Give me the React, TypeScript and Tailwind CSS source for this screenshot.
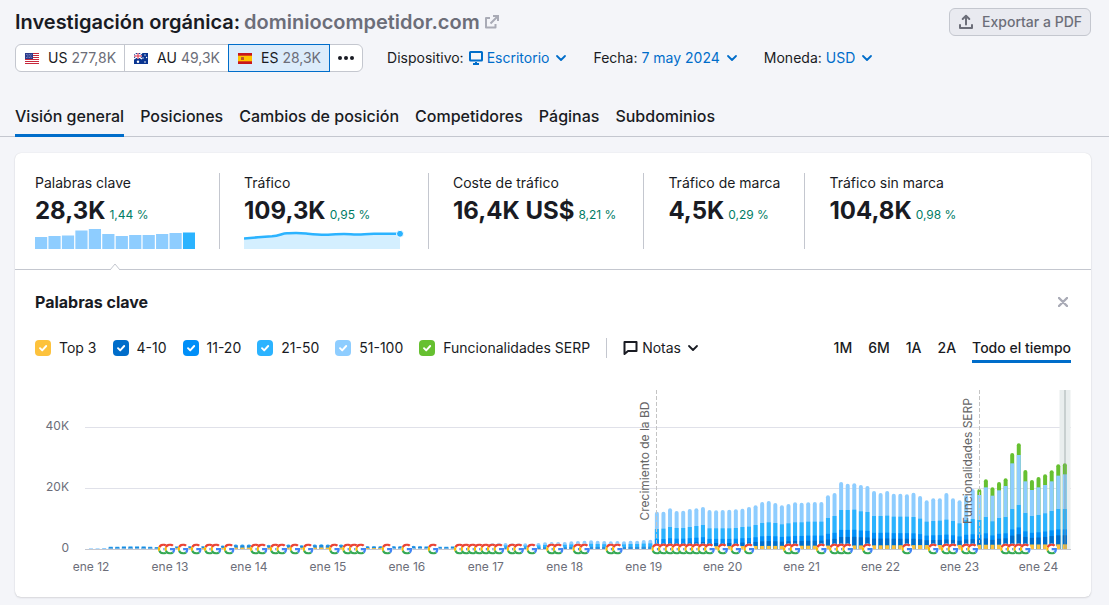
import React from 'react';
import { clsx } from 'clsx';

const countries = [
  { code: 'US', value: '277,8K', flag: <FlagUS /> },
  { code: 'AU', value: '49,3K', flag: <FlagAU /> },
  { code: 'ES', value: '28,3K', flag: <FlagES /> },
];

const tabs = [
  'Visión general',
  'Posiciones',
  'Cambios de posición',
  'Competidores',
  'Páginas',
  'Subdominios',
];

const series = [
  { label: 'Top 3', className: 'bg-[#fdc23c]' },
  { label: '4-10', className: 'bg-[#006dca]' },
  { label: '11-20', className: 'bg-[#008ff8]' },
  { label: '21-50', className: 'bg-[#2bb3ff]' },
  { label: '51-100', className: 'bg-[#8ecdff]' },
  { label: 'Funcionalidades SERP', className: 'bg-[#66c030]' },
];

const ranges = ['1M', '6M', '1A', '2A', 'Todo el tiempo'];

const years = ['12', '13', '14', '15', '16', '17', '18', '19', '20', '21', '22', '23', '24'];

// keywords per month in units of 1/3 px of bar height, january 2012 first
const earlyTotals = [
  2, 2, 3, 7, 7, 8, 8, 8, 8, 7, 6, 6, 7, 8, 8, 9, 9, 9, 10, 10, 11, 12, 14, 14, 14, 14, 13, 13, 13,
  12, 14, 13, 12, 13, 14, 15, 14, 14, 14, 13, 13, 12, 9, 9, 9, 9, 9, 9, 10, 10, 9, 8, 7, 7, 7, 8, 10,
  12, 13, 14, 15, 17, 19, 18, 17, 17, 17, 16, 18, 20, 21, 21, 21, 23, 24, 25, 26, 25, 24, 23, 24, 23,
  25, 25, 27, 28,
];

const totals = [
  112, 112, 122, 114, 115, 120, 122, 126, 117, 116, 117, 118, 119, 121, 126, 131, 141, 144, 138, 131,
  135, 140, 139, 140, 141, 141, 161, 168, 201, 196, 197, 192, 189, 174, 168, 174, 166, 166, 164, 169,
  159, 146, 152, 152, 168, 152, 146, 162, 180, 180, 209, 185, 201, 212, 288, 317, 237, 207, 216, 224,
  236, 254, 257,
];

const top50 = [
  60, 61, 66, 63, 63, 66, 69, 72, 62, 62, 62, 62, 63, 66, 67, 72, 78, 80, 78, 74, 77, 80, 80, 82, 82,
  82, 93, 99, 117, 117, 118, 113, 111, 99, 99, 100, 97, 97, 97, 96, 91, 82, 84, 85, 88, 84, 77, 87,
  90, 87, 96, 83, 93, 96, 120, 132, 108, 99, 102, 107, 114, 120, 120,
];

const serp = [18, 24, 25, 25, 23, 31, 35, 34, 30, 31, 32, 33, 34, 33];

const FIRST_DETAILED = 86;
const FIRST_SERP = 135;

const googleUpdates = [
  11, 12, 14, 16, 18, 19, 21, 25, 26, 28, 29, 31, 33, 37, 39, 40, 41, 45, 48, 52, 56, 57, 58, 59, 60,
  61, 62, 64, 65, 67, 70, 71, 74, 75, 79, 80, 86, 87, 88, 89, 90, 91, 92, 93, 94, 96, 98, 100, 106,
  107, 111, 113, 114, 115, 118, 124, 128, 130, 131, 133, 134, 139, 140, 141, 142, 146,
];

const BASE = 169;
const monthX = (i: number) => 56 + i * 6.58;

const getSegments = (i: number) => {
  if (i < FIRST_DETAILED) {
    const h = earlyTotals[i] / 3;
    if (i < 3) return [{ h, color: '#8ecdff' }];
    if (i < 62) {
      return [
        { h, color: '#5cbcf5' },
        { h: h * 0.8, color: '#1b8ae0' },
        { h: h * 0.3, color: i > 12 && i < 45 ? '#fdc23c' : '#8fc0e2' },
      ];
    }
    return [
      { h, color: '#8ecdff' },
      { h: h * 0.6, color: '#2bb3ff' },
      { h: h * 0.25, color: '#2b8fdc' },
    ];
  }

  const n = i - FIRST_DETAILED;
  const h = totals[n] / 3;
  const t = top50[n] / 3;
  const green = i >= FIRST_SERP ? serp[i - FIRST_SERP] / 3 : 0;
  return [
    ...(green ? [{ h, color: '#66c030' }] : []),
    { h: h - green, color: '#8ecdff' },
    { h: t, color: '#2bb3ff' },
    { h: t * 0.49, color: '#008ff8' },
    { h: t * (0.28 + n * 0.001), color: '#006dca' },
    { h: 2.5 + n * 0.035, color: '#fdc23c' },
  ];
};

export default function App() {
  return (
    <div className="min-h-screen bg-[#f4f5f9] pb-2 font-['Inter',sans-serif] text-sm text-[#191b23]">
      <header className="pl-[15px] pr-[18px] pt-2">
        <div className="flex items-center justify-between">
          <h1 className="flex items-center text-xl font-semibold">
            Investigación orgánica:
            <a href="#dominio" className="ml-1 flex items-center gap-1 text-[#6c6e79]">
              dominiocompetidor.com
              <ExternalIcon />
            </a>
          </h1>
          <button className="flex h-7 items-center gap-2 rounded-md border border-[#c4c7cf] bg-[#e9eaf0] px-2 font-medium text-[#6c6e79]">
            <ExportIcon />
            Exportar a PDF
          </button>
        </div>

        <div className="mt-2 flex items-center">
          <div className="flex h-7">
            {countries.map(({ code, value, flag }, i) => (
              <button
                key={code}
                className={clsx(
                  'flex items-center border pl-[9px] pr-2',
                  i === 0 && 'rounded-l-md',
                  i > 0 && '-ml-px',
                  code === 'ES'
                    ? 'relative border-[#006dca] bg-[#dcecfb]'
                    : 'border-[#c4c7cf] bg-white',
                )}
              >
                {flag}
                <span className="ml-[9px]">{code}</span>
                <span className="ml-1 text-[#6c6e79]">{value}</span>
              </button>
            ))}
            <button
              aria-label="Más países"
              className="-ml-px flex w-[34px] items-center justify-center rounded-r-md border border-[#c4c7cf] bg-white"
            >
              <svg width="16" height="4" viewBox="0 0 16 4" fill="currentColor">
                <circle cx="2" cy="2" r="2" />
                <circle cx="8" cy="2" r="2" />
                <circle cx="14" cy="2" r="2" />
              </svg>
            </button>
          </div>

          <div className="ml-6 flex items-center gap-[26px]">
            <Filter id="device" label="Dispositivo:" value="Escritorio" icon={<DesktopIcon />} />
            <Filter id="date" label="Fecha:" value="7 may 2024" />
            <Filter id="currency" label="Moneda:" value="USD" />
          </div>
        </div>
      </header>

      <nav className="mt-6 flex gap-4 border-b border-[#c4c7cf] px-[15px] text-base font-medium">
        {tabs.map((tab, i) => (
          <a
            key={tab}
            href="#tab"
            className={clsx(
              '-mb-px border-b-[3px] pb-[6px] pt-2',
              i === 0 ? 'border-[#006dca]' : 'border-transparent',
            )}
          >
            {tab}
          </a>
        ))}
      </nav>

      <main className="ml-[15px] mr-[18px] mt-4 rounded-md bg-white shadow-[0_0_1px_rgba(25,27,35,0.16),0_1px_2px_rgba(25,27,35,0.12)]">
        <Summary />
        <KeywordsPanel />
      </main>
    </div>
  );
}

const Filter = ({
  id,
  label,
  value,
  icon,
}: {
  id: string;
  label: string;
  value: string;
  icon?: React.ReactNode;
}) => (
  <div className="flex items-center">
    <label htmlFor={id} className="mr-1">
      {label}
    </label>
    <span className="flex items-center text-[#006dca]">
      {icon}
      <select id={id} className="field-sizing-content appearance-none bg-transparent">
        <option>{value}</option>
      </select>
      <Chevron className="ml-[6px]" />
    </span>
  </div>
);

const Summary = () => (
  <section className="relative flex border-b border-[#c4c7cf] px-5 py-5">
    <Metric label="Palabras clave" value="28,3K" change="1,44 %" className="pr-6">
      <BarSpark />
    </Metric>
    <Metric label="Tráfico" value="109,3K" change="0,95 %" className="border-l px-6">
      <LineSpark />
    </Metric>
    <Metric
      label="Coste de tráfico"
      value="16,4K US$"
      change="8,21 %"
      className="border-l pl-6 pr-[27px]"
    />
    <Metric label="Tráfico de marca" value="4,5K" change="0,29 %" className="border-l px-6" />
    <Metric label="Tráfico sin marca" value="104,8K" change="0,98 %" className="border-l px-6" />
    <svg className="absolute -bottom-px left-[95px]" width="10" height="7" viewBox="0 0 10 7">
      <path d="M0 7 5 1l5 6" fill="#fff" stroke="#c4c7cf" />
    </svg>
  </section>
);

const Metric = ({
  label,
  value,
  change,
  className,
  children,
}: {
  label: string;
  value: string;
  change: string;
  className?: string;
  children?: React.ReactNode;
}) => (
  <div className={clsx('h-[76px] border-[#c4c7cf]', className)}>
    <div className="leading-5">{label}</div>
    <div className="mt-[2px] flex items-baseline gap-1 whitespace-nowrap">
      <span className="text-2xl font-bold">{value}</span>
      <span className="text-xs text-[#007c65]">{change}</span>
    </div>
    {children}
  </div>
);

const BarSpark = () => {
  const heights = [12, 13, 13.5, 18.5, 20, 15, 13, 14, 14, 15, 16, 16.5];
  return (
    <svg className="mt-[2px]" width="160" height="20" viewBox="0 0 160 20">
      {heights.map((h, i) => (
        <rect
          key={i}
          x={i * 13.45}
          y={20 - h}
          width="12.2"
          height={h}
          fill={i === 11 ? '#2bb3ff' : '#8ecdff'}
        />
      ))}
    </svg>
  );
};

const LineSpark = () => {
  const line =
    'M0 9.5 14 8.300 28 7.300C36 6.500 38 4.500 43 4.300S54 3.700 62 4.500 76 6 84 5.700 94 5 100 5 108 5.600 114 5.500 122 4.800 130 4.800H156';
  return (
    <svg className="mt-[2px]" width="160" height="20" viewBox="0 0 160 20">
      <path d={`${line}V20H0Z`} fill="#d4efff" />
      <path d={line} fill="none" stroke="#2bb3ff" strokeWidth="2.6" />
      <circle cx="156" cy="4.8" r="3.5" fill="#2bb3ff" stroke="#fff" />
    </svg>
  );
};

const KeywordsPanel = () => (
  <section className="px-5 pb-[17px] pt-5">
    <div className="flex items-center justify-between">
      <h2 className="text-base font-bold">Palabras clave</h2>
      <button aria-label="Cerrar" className="p-[3px] text-[#a9abb6]">
        <svg width="10" height="10" viewBox="0 0 10 10" stroke="currentColor" strokeWidth="2.4">
          <path d="m1 1 8 8M9 1 1 9" strokeLinecap="round" />
        </svg>
      </button>
    </div>

    <div className="mt-5 flex items-start justify-between">
      <div className="flex h-7 items-center">
        <div className="flex gap-4">
          {series.map(({ label, className }) => (
            <label key={label} className="flex items-center gap-2">
              <span className="grid">
                <input
                  type="checkbox"
                  defaultChecked
                  className={clsx(
                    'peer col-start-1 row-start-1 size-4 appearance-none rounded',
                    className,
                  )}
                />
                <svg
                  className="pointer-events-none invisible col-start-1 row-start-1 peer-checked:visible"
                  width="16"
                  height="16"
                  viewBox="0 0 16 16"
                  fill="none"
                >
                  <path
                    d="m5 8.200 2.200 2.200L11.200 6"
                    stroke="#fff"
                    strokeWidth="1.9"
                    strokeLinecap="round"
                    strokeLinejoin="round"
                  />
                </svg>
              </span>
              {label}
            </label>
          ))}
        </div>
        <div className="mx-4 h-5 w-px bg-[#c4c7cf]" />
        <button className="flex items-center gap-1">
          <NoteIcon />
          Notas
          <Chevron className="ml-[2px]" />
        </button>
      </div>

      <div className="flex gap-4 font-medium">
        {ranges.map((range) => (
          <button
            key={range}
            className={clsx(
              'border-b-[3px] pb-[2px] pt-1',
              range === 'Todo el tiempo' ? 'border-[#006dca]' : 'border-transparent',
            )}
          >
            {range}
          </button>
        ))}
      </div>
    </div>

    <Chart />
  </section>
);

const Chart = () => (
  <svg
    viewBox="0 0 1036 200"
    className="mt-[17px] block h-auto w-full text-xs"
    role="img"
    aria-label="Palabras clave por mes"
  >
    {['40K', '20K', '0'].map((label, i) => (
      <g key={label}>
        <rect x="50" y={47 + i * 61} width="986" height="1" fill={i === 2 ? '#c4c7cf' : '#e0e1e9'} />
        <text x="34" y={50 + i * 61} textAnchor="end" fill="#6c6e79">
          {label}
        </text>
      </g>
    ))}

    <rect x="1024.5" y="10" width="11" height="159" fill="#e9eeee" />

    {Array.from({ length: 149 }, (_, i) => (
      <Bar key={i} index={i} />
    ))}

    <rect x="1029" y="10" width="2" height="159" fill="#8b9898" opacity="0.35" />

    <Marker index={86} label="Crecimiento de la BD" />
    <Marker index={135} label="Funcionalidades SERP" />

    {googleUpdates.map((i) => (
      <GoogleMark key={i} x={monthX(i)} y={BASE} />
    ))}

    {years.map((year, i) => (
      <text key={year} x={monthX(i * 12)} y="191" textAnchor="middle" fill="#6c6e79">
        ene {year}
      </text>
    ))}
  </svg>
);

const Bar = ({ index }: { index: number }) => {
  const segments = getSegments(index);
  const x = monthX(index) - 2;
  return (
    <>
      {segments.map(({ h, color }, i) => {
        if (i > 0 || h < 3) {
          return <rect key={i} x={x} y={BASE - h} width="4" height={h} fill={color} />;
        }
        return (
          <path key={i} d={`M${x} ${BASE}V${BASE - h + 2}a2 2 0 0 1 4 0V${BASE}Z`} fill={color} />
        );
      })}
    </>
  );
};

const Marker = ({ index, label }: { index: number; label: string }) => {
  const x = Math.floor(monthX(index)) + 0.5;
  return (
    <>
      <path d={`M${x} 10V163`} stroke="#c4c4c4" strokeDasharray="4 2" />
      <text transform={`translate(${x - 8} 81) rotate(-90)`} textAnchor="middle" fill="#666">
        {label}
      </text>
    </>
  );
};

const GoogleMark = ({ x, y }: { x: number; y: number }) => (
  <>
    <circle cx={x} cy={y} r="5.5" fill="#fff" />
    <svg x={x - 5.5} y={y - 5.5} width="11" height="11" viewBox="0 0 48 48">
      <path
        fill="#ea4335"
        d="M24 9.500c3.540 0 6.710 1.220 9.210 3.600l6.850-6.850C35.900 2.380 30.470 0 24 0 14.620 0 6.510 5.380 2.560 13.220l7.980 6.190C12.430 13.720 17.740 9.500 24 9.500z"
      />
      <path
        fill="#4285f4"
        d="M46.980 24.550c0-1.570-.15-3.090-.38-4.550H24v9.020h12.940c-.58 2.960-2.260 5.480-4.780 7.180l7.730 6c4.510-4.180 7.090-10.360 7.090-17.650z"
      />
      <path
        fill="#fbbc05"
        d="M10.530 28.590c-.48-1.450-.76-2.990-.76-4.590s.27-3.140.76-4.590l-7.980-6.190C.92 16.460 0 20.120 0 24c0 3.880.92 7.540 2.560 10.780l7.970-6.190z"
      />
      <path
        fill="#34a853"
        d="M24 48c6.480 0 11.930-2.130 15.890-5.810l-7.730-6c-2.150 1.450-4.920 2.300-8.160 2.300-6.260 0-11.570-4.220-13.470-9.910l-7.980 6.190C6.510 42.620 14.620 48 24 48z"
      />
    </svg>
  </>
);

function Chevron({ className }: { className?: string }) {
  return (
    <svg className={className} width="12" height="8" viewBox="0 0 12 8" fill="none">
      <path
        d="m2 2 4 4 4-4"
        stroke="currentColor"
        strokeWidth="1.8"
        strokeLinecap="round"
        strokeLinejoin="round"
      />
    </svg>
  );
}

function ExternalIcon() {
  return (
    <svg width="16" height="16" viewBox="0 0 16 16" fill="none" stroke="#a9abb6" strokeWidth="2">
      <path d="M6 4H2v9.500h9.500V10" strokeLinejoin="round" />
      <path d="M9 2h5v5M14 2 6.500 9.500" />
    </svg>
  );
}

function ExportIcon() {
  return (
    <svg
      width="16"
      height="16"
      viewBox="0 0 16 16"
      fill="none"
      stroke="currentColor"
      strokeWidth="2"
      strokeLinecap="round"
      strokeLinejoin="round"
    >
      <path d="M2 11v3h12v-3M8 10.500V2M4.700 5 8 1.800 11.300 5" />
    </svg>
  );
}

function DesktopIcon() {
  return (
    <svg className="mx-px mr-1" width="14" height="14" viewBox="0 0 14 14" fill="none">
      <rect x="1" y="1" width="12" height="8.5" rx="0.5" stroke="currentColor" strokeWidth="2" />
      <path d="M7 11v2M4 13h6" stroke="currentColor" strokeWidth="2" />
    </svg>
  );
}

function NoteIcon() {
  return (
    <svg width="15" height="16" viewBox="0 0 15 16" fill="none">
      <path d="M1.500 14V2h12v9H5Z" stroke="currentColor" strokeWidth="2" strokeLinejoin="round" />
    </svg>
  );
}

function FlagUS() {
  return (
    <svg width="14" height="11" viewBox="0 0 14 11">
      <rect width="14" height="11" fill="#fff" />
      <path d="M0 .5h14M0 2.500h14M0 4.500h14M0 6.500h14M0 8.500h14M0 10.500h14" stroke="#c8283c" />
      <rect width="8" height="6" fill="#2a3a8c" />
      <path
        d="M1 1.500h6M2 3h5M1 4.500h6"
        stroke="#b9c0e4"
        strokeWidth="0.7"
        strokeDasharray="0.7 0.9"
      />
    </svg>
  );
}

function FlagAU() {
  return (
    <svg width="14" height="11" viewBox="0 0 14 11">
      <rect width="14" height="11" fill="#0a3591" />
      <path d="m0 0 8 6M8 0 0 6M4 0v6M0 3h8" stroke="#fff" strokeWidth="1.4" />
      <path d="M4 0v6M0 3h8" stroke="#e0304a" />
      <g fill="#fff">
        <circle cx="4" cy="8.7" r="1.2" />
        <circle cx="11" cy="2" r="0.7" />
        <circle cx="9" cy="5" r="0.7" />
        <circle cx="12.6" cy="4.5" r="0.7" />
        <circle cx="11" cy="9" r="0.8" />
      </g>
    </svg>
  );
}

function FlagES() {
  return (
    <svg width="14" height="11" viewBox="0 0 14 11">
      <rect width="14" height="11" fill="#c8161d" />
      <rect y="2.7" width="14" height="5.6" fill="#ffc400" />
      <rect x="3" y="4" width="3" height="3" rx="0.5" fill="#b8562a" />
    </svg>
  );
}
